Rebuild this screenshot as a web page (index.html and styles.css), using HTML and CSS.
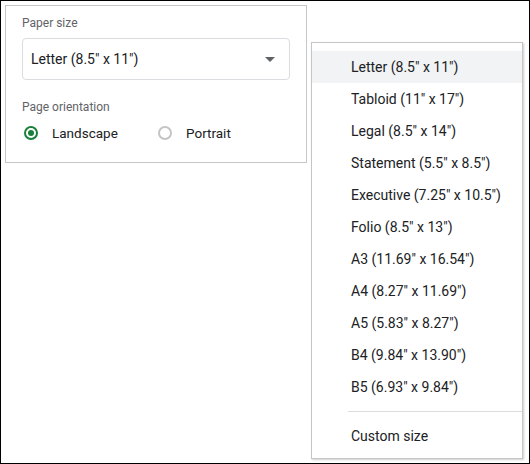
FILE: index.html
```html
<!DOCTYPE html>
<html lang="en">

<head>
    <meta charset="UTF-8">
    <title>Page setup</title>
    <link rel="stylesheet" href="styles.css">
</head>

<body>
    <div class="frame">
        <div class="panel">
            <p class="label">Paper size</p>
            <div class="select">
                <span>Letter (8.5" x 11")</span>
                <span class="arrow"></span>
            </div>
            <p class="label second">Page orientation</p>
            <div class="radios">
                <label class="radio"><span class="dot checked"></span>Landscape</label>
                <label class="radio"><span class="dot"></span>Portrait</label>
            </div>
        </div>

        <ul class="menu">
            <li class="active">Letter (8.5" x 11")</li>
            <li>Tabloid (11" x 17")</li>
            <li>Legal (8.5" x 14")</li>
            <li>Statement (5.5" x 8.5")</li>
            <li>Executive (7.25" x 10.5")</li>
            <li>Folio (8.5" x 13")</li>
            <li>A3 (11.69" x 16.54")</li>
            <li>A4 (8.27" x 11.69")</li>
            <li>A5 (5.83" x 8.27")</li>
            <li>B4 (9.84" x 13.90")</li>
            <li>B5 (6.93" x 9.84")</li>
            <li class="sep"></li>
            <li>Custom size</li>
        </ul>
    </div>
</body>

</html>
```

FILE: styles.css
```css
* {
    margin: 0;
    padding: 0;
    box-sizing: border-box;
}

body {
    background-color: white;
    font-family: Roboto, Arial, sans-serif;
    color: #202124;
}

.frame {
    position: relative;
    width: 530px;
    height: 464px;
    border: 1px solid #000;
    padding: 4px;
}

.panel {
    width: 302px;
    height: 158px;
    border: 1px solid #c6c6c6;
    padding: 9px 16px 0;
}

.label {
    font-size: 12px;
    line-height: 16px;
    color: #5f6368;
}

.label.second {
    margin-top: 19px;
}

.select {
    margin-top: 7px;
    height: 42px;
    width: 268px;
    border: 1px solid #dadce0;
    border-radius: 4px;
    display: flex;
    align-items: center;
    justify-content: space-between;
    padding: 0 14px 0 8px;
    font-size: 14px;
}

.arrow {
    width: 0;
    height: 0;
    border-left: 5px solid transparent;
    border-right: 5px solid transparent;
    border-top: 5px solid #5f6368;
}

.radios {
    margin-top: 6px;
    display: flex;
    height: 24px;
    align-items: center;
    font-size: 13.5px;
}

.radio {
    display: flex;
    align-items: center;
    gap: 14px;
    width: 134px;
    padding-left: 2px;
}

.dot {
    width: 14px;
    height: 14px;
    border: 2px solid #c4c4c4;
    border-radius: 50%;
    display: flex;
    align-items: center;
    justify-content: center;
}

.dot.checked {
    border-color: #188038;
}

.dot.checked::after {
    content: "";
    width: 6px;
    height: 6px;
    border-radius: 50%;
    background-color: #188038;
}

.menu {
    position: absolute;
    left: 310px;
    top: 41px;
    width: 212px;
    list-style: none;
    border: 1px solid #c6c6c6;
    box-shadow: 1px 1px 2px rgba(0, 0, 0, 0.2);
    padding: 8px 0 6px;
    background-color: white;
    font-size: 14px;
}

.menu li {
    height: 32px;
    line-height: 32px;
    padding-left: 39px;
}

.menu li.active {
    background-color: #f1f3f4;
}

.menu li.sep {
    height: 1px;
    margin: 8px 0 8px 36px;
    background-color: #dadce0;
}
```
